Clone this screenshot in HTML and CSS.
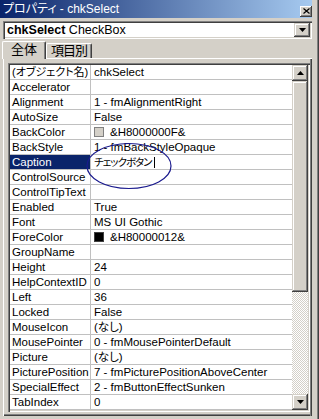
FILE: index.html
```html
<!DOCTYPE html>
<html lang="ja">
<head>
<meta charset="utf-8">
<link rel="stylesheet" href="styles.css">
</head>
<body>
<div class="window">
  <div class="titlebar">
    <span class="title">プロパティ - chkSelect</span>
    <span class="close"><svg width="7" height="6" viewBox="0 0 7 6"><path d="M0.5 0.5 L6.5 5.5 M6.5 0.5 L0.5 5.5" stroke="#000" stroke-width="1.2" fill="none"/></svg></span>
  </div>
  <div class="combo">
    <div class="combo-text"><b>chkSelect</b> CheckBox</div>
    <div class="combo-btn"><svg width="7" height="4" viewBox="0 0 7 4"><path d="M0 0 H7 L3.5 4 Z" fill="#000"/></svg></div>
  </div>
  <div class="tabs">
    <div class="tab active">全体</div>
    <div class="tab inactive">項目別</div>
  </div>
  <div class="panel">
    <div class="grid">
      <div class="rows">
        <div class="row"><div class="name nm-jp">(オブジェクト名)</div><div class="val">chkSelect</div></div>
        <div class="row"><div class="name">Accelerator</div><div class="val"></div></div>
        <div class="row"><div class="name">Alignment</div><div class="val">1 - fmAlignmentRight</div></div>
        <div class="row"><div class="name">AutoSize</div><div class="val">False</div></div>
        <div class="row"><div class="name">BackColor</div><div class="val"><span class="swatch gray"></span>&amp;H8000000F&amp;</div></div>
        <div class="row"><div class="name">BackStyle</div><div class="val">1 - fmBackStyleOpaque</div></div>
        <div class="row"><div class="name sel">Caption</div><div class="val"><span class="jp">チェックボタン</span><span class="cursor"></span></div></div>
        <div class="row"><div class="name">ControlSource</div><div class="val"></div></div>
        <div class="row"><div class="name">ControlTipText</div><div class="val"></div></div>
        <div class="row"><div class="name">Enabled</div><div class="val">True</div></div>
        <div class="row"><div class="name">Font</div><div class="val">MS UI Gothic</div></div>
        <div class="row"><div class="name">ForeColor</div><div class="val"><span class="swatch black"></span>&amp;H80000012&amp;</div></div>
        <div class="row"><div class="name">GroupName</div><div class="val"></div></div>
        <div class="row"><div class="name">Height</div><div class="val">24</div></div>
        <div class="row"><div class="name">HelpContextID</div><div class="val">0</div></div>
        <div class="row"><div class="name">Left</div><div class="val">36</div></div>
        <div class="row"><div class="name">Locked</div><div class="val">False</div></div>
        <div class="row"><div class="name">MouseIcon</div><div class="val">(なし)</div></div>
        <div class="row"><div class="name">MousePointer</div><div class="val">0 - fmMousePointerDefault</div></div>
        <div class="row"><div class="name">Picture</div><div class="val">(なし)</div></div>
        <div class="row"><div class="name">PicturePosition</div><div class="val">7 - fmPicturePositionAboveCenter</div></div>
        <div class="row"><div class="name">SpecialEffect</div><div class="val">2 - fmButtonEffectSunken</div></div>
        <div class="row"><div class="name">TabIndex</div><div class="val">0</div></div>
      </div>
      <div class="scrollbar">
        <div class="sb-btn"><svg width="7" height="4" viewBox="0 0 7 4"><path d="M3.5 0 L7 4 H0 Z" fill="#000"/></svg></div>
        <div class="thumb"></div>
        <div class="track"></div>
        <div class="sb-btn"><svg width="7" height="4" viewBox="0 0 7 4"><path d="M0 0 H7 L3.5 4 Z" fill="#000"/></svg></div>
      </div>
    </div>
  </div>
  <svg class="annot" width="90" height="50" viewBox="0 0 90 50"><ellipse cx="45" cy="24" rx="42" ry="22.5" fill="none" stroke="#1a1a8e" stroke-width="1.2"/></svg>
</div>
</body>
</html>
```
FILE: styles.css
```css
* { box-sizing: border-box; }
body {
  margin: 0;
  width: 319px;
  height: 419px;
  overflow: hidden;
  background: #d4d0c8;
  font-family: "Liberation Sans", "Noto Sans CJK JP", sans-serif;
  font-feature-settings: "palt";
  color: #000;
}
.window {
  position: relative;
  width: 319px;
  height: 419px;
  padding: 0 7px 3px 0;
  display: flex;
  flex-direction: column;
  box-shadow: inset -1px 0 #404040, inset -2px 0 #808080;
}
.titlebar {
  height: 18px;
  flex: none;
  background: linear-gradient(to right, #0a246a, #a6caf0);
  display: flex;
  align-items: center;
  justify-content: space-between;
  padding-left: 3px;
  color: #fff;
  font-size: 12px;
  line-height: 14px;
}
.close {
  width: 12px;
  height: 11px;
  margin: 4px 0 0 0;
  background: #d4d0c8;
  display: flex;
  align-items: center;
  justify-content: center;
  box-shadow: inset -1px -1px #404040, inset 1px 1px #fff, inset -2px -2px #808080;
}
.combo {
  flex: none;
  margin: 3px 0 0 3px;
  width: 309px;
  height: 18px;
  padding: 2px;
  background: #fff;
  display: flex;
  box-shadow: inset 1px 1px #808080, inset 2px 2px #404040, inset -1px -1px #fff, inset -2px -2px #d4d0c8;
}
.combo-text {
  flex: 1;
  font-size: 12.5px;
  line-height: 14px;
  padding-left: 2px;
  white-space: nowrap;
}
.combo-btn {
  width: 16px;
  height: 14px;
  background: #d4d0c8;
  display: flex;
  align-items: center;
  justify-content: center;
  box-shadow: inset -1px -1px #404040, inset 1px 1px #d4d0c8, inset -2px -2px #808080, inset 2px 2px #fff;
}
.tabs {
  flex: none;
  position: relative;
  z-index: 1;
  display: flex;
  align-items: flex-end;
  height: 17px;
  margin-top: 2px;
  padding-left: 2px;
}
.tab {
  height: 15px;
  font-size: 13px;
  line-height: 14px;
  text-align: center;
  background: #d4d0c8;
  border-top: 1px solid #fff;
  border-left: 1px solid #fff;
  border-right: 1px solid #404040;
  border-radius: 2px 2px 0 0;
  box-shadow: inset -1px 0 #808080;
}
.tab.active {
  width: 44px;
  height: 18px;
  margin-bottom: -1px;
  padding-top: 1px;
}
.tab.inactive {
  width: 46px;
  letter-spacing: -1px;
}
.panel {
  flex: 1;
  width: 309px;
  margin-left: 3px;
  border-top: 1px solid #fff;
  border-left: 1px solid #fff;
  padding: 4px 2px 0 4px;
  box-shadow: inset -1px 0 #404040, inset -2px 0 #808080, inset 0 -1px #404040, inset 0 -2px #808080;
}
.grid {
  width: 302px;
  height: 349px;
  padding: 2px;
  display: flex;
  background: #fff;
  box-shadow: inset 1px 1px #808080, inset 2px 2px #404040, inset -1px -1px #fff, inset -2px -2px #d4d0c8;
}
.rows {
  width: 282px;
  display: flex;
  flex-direction: column;
}
.row {
  height: 15px;
  display: flex;
  border-bottom: 1px solid #c0c0c0;
  font-size: 11.5px;
  line-height: 14px;
  white-space: nowrap;
}
.name {
  width: 81px;
  flex: none;
  padding-left: 2px;
  border-right: 1px solid #c0c0c0;
  overflow: hidden;
}
.name.nm-jp {
  font-size: 11px;
}
.name.sel {
  background: #0a246a;
  color: #fff;
}
.val {
  flex: 1;
  padding-left: 3px;
  overflow: hidden;
  display: flex;
  align-items: center;
}
.jp {
  font-size: 10.5px;
  letter-spacing: -1px;
}
.swatch {
  width: 10px;
  height: 10px;
  margin-right: 6px;
  border: 1px solid #404040;
}
.swatch.gray { background: #d4d0c8; border-color: #808080; }
.swatch.black { background: #000; }
.cursor {
  width: 1px;
  height: 11px;
  margin-left: 2px;
  background: #000;
}
.scrollbar {
  width: 16px;
  display: flex;
  flex-direction: column;
}
.sb-btn, .thumb {
  background: #d4d0c8;
  box-shadow: inset -1px -1px #404040, inset 1px 1px #d4d0c8, inset -2px -2px #808080, inset 2px 2px #fff;
}
.sb-btn {
  height: 16px;
  flex: none;
  display: flex;
  align-items: center;
  justify-content: center;
}
.thumb {
  height: 211px;
  flex: none;
}
.track {
  flex: 1;
  background: repeating-conic-gradient(#fff 0 25%, #d4d0c8 0 50%) 0 0 / 2px 2px;
}
.annot {
  position: absolute;
  left: 84px;
  top: 142px;
}
```
